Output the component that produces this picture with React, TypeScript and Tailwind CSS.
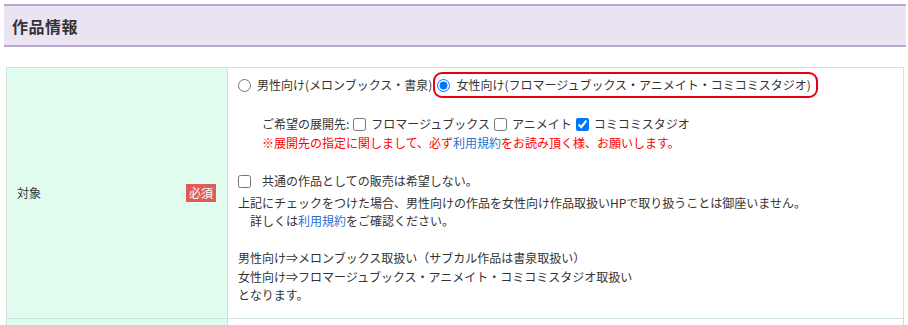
import { useState } from 'react'

const App = () => {
  const [target, setTarget] = useState('female')
  const [shops, setShops] = useState({ fromage: false, animate: false, comicomi: true })
  const [noShared, setNoShared] = useState(false)

  const toggleShop = (key: keyof typeof shops) =>
    setShops((prev) => ({ ...prev, [key]: !prev[key] }))

  return (
    <div className="w-[908px] h-[325px] overflow-hidden bg-white pt-[4px] font-['Meiryo','Noto_Sans_CJK_JP',sans-serif] text-[#333]">
      {/* Section header */}
      <div className="ml-[4px] mr-[2px] h-[43px] border-y-2 border-[#b6a8cf] bg-[#e9e3f2] flex items-center pl-[8px]">
        <h2 className="text-[16px] font-bold text-[#333] tracking-[0.5px]">作品情報</h2>
      </div>

      {/* Form table */}
      <div className="mt-[20px] ml-[6px] mr-[4px] border border-[#cfe3da]">
        <div className="flex border-b border-[#cfe3da]">
          <div className="w-[221px] shrink-0 bg-[#e0fcee] border-r border-[#cfe3da] flex items-center justify-between pl-[10px] pr-[11px]">
            <span className="text-[12px]">対象</span>
            <span className="bg-[#e05c5c] text-white text-[12px] leading-[18px] px-[3px]">必須</span>
          </div>

          <div className="flex-1 pl-[10px] pt-[4px] pb-[13px] text-[12px] leading-[18.5px]">
            {/* Radio row */}
            <div className="flex items-center h-[26px]">
              <label className="flex items-center cursor-pointer">
                <input
                  type="radio"
                  name="target"
                  checked={target === 'male'}
                  onChange={() => setTarget('male')}
                  className="m-0 w-[13px] h-[13px] accent-[#0075ff]"
                />
                <span className="ml-[6px]">男性向け(メロンブックス・書泉)</span>
              </label>
              <label className="ml-[1px] flex items-center h-[26px] border-2 border-[#e60012] rounded-[9px] pl-[2px] pr-[5px] cursor-pointer">
                <input
                  type="radio"
                  name="target"
                  checked={target === 'female'}
                  onChange={() => setTarget('female')}
                  className="m-0 w-[13px] h-[13px] accent-[#0075ff]"
                />
                <span className="ml-[6px]">女性向け(フロマージュブックス・アニメイト・コミコミスタジオ)</span>
              </label>
            </div>

            {/* Preferred shops */}
            <div className="pl-[24px] mt-[17px]">
              <div className="flex items-center">
                <span>ご希望の展開先:</span>
                <input
                  type="checkbox"
                  checked={shops.fromage}
                  onChange={() => toggleShop('fromage')}
                  className="ml-[4px] m-0 w-[13px] h-[13px] accent-[#0075ff]"
                />
                <span className="ml-[5px]">フロマージュブックス</span>
                <input
                  type="checkbox"
                  checked={shops.animate}
                  onChange={() => toggleShop('animate')}
                  className="ml-[4px] m-0 w-[13px] h-[13px] accent-[#0075ff]"
                />
                <span className="ml-[5px]">アニメイト</span>
                <input
                  type="checkbox"
                  checked={shops.comicomi}
                  onChange={() => toggleShop('comicomi')}
                  className="ml-[4px] m-0 w-[13px] h-[13px] accent-[#0075ff]"
                />
                <span className="ml-[5px]">コミコミスタジオ</span>
              </div>
              <p className="text-[#ff0000]">
                ※展開先の指定に関しまして、必ず<a href="#" className="text-[#2a6fd0]">利用規約</a>をお読み頂く様、お願いします。
              </p>
            </div>

            {/* Shared sale */}
            <label className="mt-[20px] flex items-center cursor-pointer">
              <input
                type="checkbox"
                checked={noShared}
                onChange={() => setNoShared(!noShared)}
                className="m-0 w-[13px] h-[13px] accent-[#0075ff]"
              />
              <span className="ml-[11px]">共通の作品としての販売は希望しない。</span>
            </label>
            <p className="mt-[3px]">
              上記にチェックをつけた場合、男性向けの作品を女性向け作品取扱いHPで取り扱うことは御座いません。
            </p>
            <p className="pl-[12px]">
              詳しくは<a href="#" className="text-[#2a6fd0]">利用規約</a>をご確認ください。
            </p>

            <p className="mt-[18.5px]">男性向け⇒メロンブックス取扱い（サブカル作品は書泉取扱い）</p>
            <p>女性向け⇒フロマージュブックス・アニメイト・コミコミスタジオ取扱い</p>
            <p>となります。</p>
          </div>
        </div>

        {/* Next row (cut off) */}
        <div className="flex h-[10px]">
          <div className="w-[221px] shrink-0 bg-[#e0fcee] border-r border-[#cfe3da]" />
          <div className="flex-1" />
        </div>
      </div>
    </div>
  )
}

export default App
